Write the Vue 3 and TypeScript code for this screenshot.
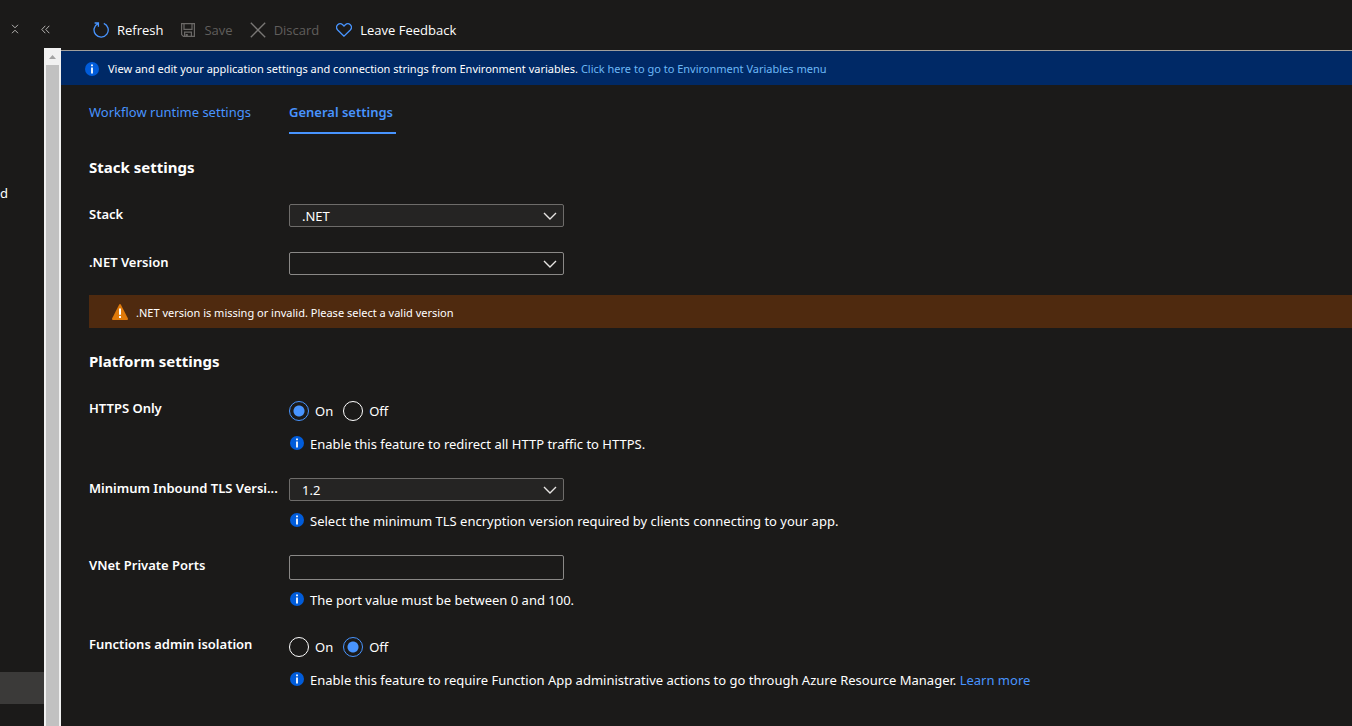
<script setup lang="ts">
import { ref } from 'vue'

const stack = ref('.NET')
const netVersion = ref('')
const tlsVersion = ref('1.2')
const privatePorts = ref('')
const httpsOnly = ref('On')
const adminIsolation = ref('Off')
const choices = ['On', 'Off']
</script>

<template>
  <div class="shell">
    <aside class="side">
      <div class="side-head">
        <button class="icon-btn" type="button" aria-label="Collapse all">
          <svg width="8" height="10" viewBox="0 0 8 10" fill="none" stroke="#b5b3b1"><path d="M1 .8 4 3.8 7 .8M1 9.2 4 6.2 7 9.2" /></svg>
        </button>
        <button class="icon-btn" type="button" aria-label="Hide menu">
          <svg width="9" height="9" viewBox="0 0 9 9" fill="none" stroke="#b5b3b1"><path d="M4.3 .8.8 4.5l3.5 3.7M8.3.8 4.8 4.5l3.5 3.7" /></svg>
        </button>
      </div>
      <div class="side-body">
        <nav class="menu">
          <a href="#" class="menu-item">d</a>
          <div class="menu-current"></div>
        </nav>
        <div class="scroll">
          <svg class="scroll-up" width="7" height="4" viewBox="0 0 7 4"><path d="M0 4 3.5 0 7 4z" fill="#a3a3a3" /></svg>
          <div class="thumb"></div>
        </div>
      </div>
    </aside>

    <main class="main">
      <div class="toolbar">
        <button class="cmd" type="button">
          <svg width="16" height="16" viewBox="0 0 16 16" fill="none" stroke="#4894fe" stroke-width="1.3"><path d="M10.8 1.4A7.1 7.1 0 1 1 5 1.6M1.6 1h3.8v3.8" /></svg>
          Refresh
        </button>
        <button class="cmd" type="button" disabled>
          <svg width="16" height="16" viewBox="0 0 16 16" fill="none" stroke="#6a6866" stroke-width="1.2"><path d="M1.6 1.6h12.8v12.8H3.4L1.6 12.6zM4 1.8v5.6h8V1.8M4.6 14.2v-4h6.8v4" /><path d="M5.6 12h2.200v2.400H5.600z" fill="#6a6866" stroke="none" /></svg>
          Save
        </button>
        <button class="cmd" type="button" disabled>
          <svg width="16" height="16" viewBox="0 0 16 16" fill="none" stroke="#797775" stroke-width="1.3"><path d="M.8.8l14.4 14.4M15.2.8.8 15.2" /></svg>
          Discard
        </button>
        <button class="cmd" type="button">
          <svg width="16" height="16" viewBox="0 0 16 16" fill="none" stroke="#4894fe" stroke-width="1.3"><path d="M8 14.2 1.7 8C.3 6.5.3 4.2 1.7 2.8s3.6-1.3 5 0L8 4.1l1.3-1.3c1.4-1.3 3.6-1.4 5 0s1.4 3.7 0 5.2z" /></svg>
          Leave Feedback
        </button>
      </div>

      <div class="banner">
        <svg class="info" width="14" height="14" viewBox="0 0 14 14"><circle cx="7" cy="7" r="7" fill="#015cda" /><path d="M6.1 2.5h1.8v1.7H6.1zM6.1 5.5h1.8v6H6.1z" fill="#fff" /></svg>
        <span>View and edit your application settings and connection strings from Environment variables. <a href="#">Click here to go to Environment Variables menu</a></span>
      </div>

      <div class="tabs" role="tablist">
        <button class="tab" type="button" role="tab" aria-selected="false">Workflow runtime settings</button>
        <button class="tab active" type="button" role="tab" aria-selected="true">General settings</button>
      </div>

      <form class="content">
        <h2>Stack settings</h2>
        <div class="row">
          <label class="label" for="stack">Stack</label>
          <div class="select-box filled">
            <select id="stack" v-model="stack"><option>.NET</option></select>
            <svg class="chevron" width="14" height="8" viewBox="0 0 14 8" fill="none" stroke="#e6e4e2" stroke-width="1.4"><path d="M1 1l6 6 6-6" /></svg>
          </div>
        </div>
        <div class="row">
          <label class="label" for="version">.NET Version</label>
          <div class="select-box">
            <select id="version" v-model="netVersion"><option value=""></option></select>
            <svg class="chevron" width="14" height="8" viewBox="0 0 14 8" fill="none" stroke="#e6e4e2" stroke-width="1.4"><path d="M1 1l6 6 6-6" /></svg>
          </div>
        </div>

        <div class="warning" role="alert">
          <svg width="16" height="16" viewBox="0 0 16 16"><path d="M7.2.6Q8-.5 8.8.6l7 13.6q.6 1.5-.8 1.8H1Q-.4 15.7.2 14.2z" fill="#e07a0a" /><path d="M7 4.5h2v6.3H7zM7 12h2v2H7z" fill="#fff" /></svg>
          <span>.NET version is missing or invalid. Please select a valid version</span>
        </div>

        <h2>Platform settings</h2>
        <div class="row">
          <span id="https-label" class="label">HTTPS Only</span>
          <div>
            <div class="radios" role="radiogroup" aria-labelledby="https-label">
              <label v-for="c in choices" :key="c"><input v-model="httpsOnly" type="radio" name="https" :value="c" />{{ c }}</label>
            </div>
            <p class="help">
              <svg class="info" width="14" height="14" viewBox="0 0 14 14"><circle cx="7" cy="7" r="7" fill="#015cda" /><path d="M6.1 2.5h1.8v1.7H6.1zM6.1 5.5h1.8v6H6.1z" fill="#fff" /></svg>
              <span>Enable this feature to redirect all HTTP traffic to HTTPS.</span>
            </p>
          </div>
        </div>
        <div class="row">
          <label class="label" for="tls">Minimum Inbound TLS Versi...</label>
          <div>
            <div class="select-box filled">
              <select id="tls" v-model="tlsVersion"><option>1.2</option></select>
              <svg class="chevron" width="14" height="8" viewBox="0 0 14 8" fill="none" stroke="#e6e4e2" stroke-width="1.4"><path d="M1 1l6 6 6-6" /></svg>
            </div>
            <p class="help">
              <svg class="info" width="14" height="14" viewBox="0 0 14 14"><circle cx="7" cy="7" r="7" fill="#015cda" /><path d="M6.1 2.5h1.8v1.7H6.1zM6.1 5.5h1.8v6H6.1z" fill="#fff" /></svg>
              <span>Select the minimum TLS encryption version required by clients connecting to your app.</span>
            </p>
          </div>
        </div>
        <div class="row">
          <label class="label" for="ports">VNet Private Ports</label>
          <div>
            <input id="ports" v-model="privatePorts" class="text" type="text" />
            <p class="help">
              <svg class="info" width="14" height="14" viewBox="0 0 14 14"><circle cx="7" cy="7" r="7" fill="#015cda" /><path d="M6.1 2.5h1.8v1.7H6.1zM6.1 5.5h1.8v6H6.1z" fill="#fff" /></svg>
              <span>The port value must be between 0 and 100.</span>
            </p>
          </div>
        </div>
        <div class="row">
          <span id="iso-label" class="label">Functions admin isolation</span>
          <div>
            <div class="radios" role="radiogroup" aria-labelledby="iso-label">
              <label v-for="c in choices" :key="c"><input v-model="adminIsolation" type="radio" name="isolation" :value="c" />{{ c }}</label>
            </div>
            <p class="help">
              <svg class="info" width="14" height="14" viewBox="0 0 14 14"><circle cx="7" cy="7" r="7" fill="#015cda" /><path d="M6.1 2.5h1.8v1.7H6.1zM6.1 5.5h1.8v6H6.1z" fill="#fff" /></svg>
              <span>Enable this feature to require Function App administrative actions to go through Azure Resource Manager. <a href="#">Learn more</a></span>
            </p>
          </div>
        </div>
      </form>
    </main>
  </div>
</template>

<style>
body {
  margin: 0;
  background: #1b1a19;
}
</style>

<style scoped>
.shell {
  display: flex;
  min-height: 100vh;
  color: #fff;
  font: 13px/20px "Segoe UI", "Noto Sans", "Open Sans", sans-serif;
}
.shell *, .shell {
  box-sizing: border-box;
}
svg {
  flex: none;
  display: block;
}
button, input, select {
  font: inherit;
  color: inherit;
}
button {
  border: 0;
  padding: 0;
  background: none;
}
a {
  color: #4894fe;
  text-decoration: none;
}
.side {
  flex: none;
  width: 61px;
  display: flex;
  flex-direction: column;
}
.side-head {
  height: 48px;
  padding: 10px 11px 0;
  display: flex;
  align-items: center;
  justify-content: space-between;
}
.side-body {
  flex: 1;
  display: flex;
}
.menu {
  flex: 1;
  display: flex;
  flex-direction: column;
  justify-content: space-between;
  padding: 135px 0 22px;
}
.menu-item {
  color: #fff;
}
.menu-current {
  height: 32px;
  background: #3b3a39;
}
.scroll {
  width: 17px;
  display: flex;
  flex-direction: column;
  align-items: center;
  background: #f1f1f1;
}
.scroll-up {
  margin: 7px 0 6px;
}
.thumb {
  flex: 1;
  width: 13px;
  background: #c1c1c1;
}
.main {
  flex: 1;
  min-width: 0;
}
.toolbar {
  height: 51px;
  padding: 9px 0 0 32px;
  display: flex;
  align-items: center;
  gap: 17px;
  border-bottom: 1px solid #a19f9d;
  font-family: "Segoe UI", "Open Sans", sans-serif;
}
.cmd {
  display: flex;
  align-items: center;
  gap: 8px;
}
.cmd:disabled {
  color: #605e5c;
}
.banner {
  min-height: 34px;
  padding: 2px 24px 0;
  display: flex;
  align-items: center;
  gap: 9px;
  background: #002966;
  font-size: 11px;
}
.banner a {
  color: #6cb8f6;
}
.tabs {
  display: flex;
  gap: 38px;
  padding: 15px 28px 0;
}
.tab {
  height: 34px;
  padding-bottom: 8px;
  color: #4894fe;
  border-bottom: 2px solid transparent;
}
.tab.active {
  padding-right: 3px;
  font-weight: 600;
  border-bottom-color: #4894fe;
}
.content {
  padding: 21px 0 0 28px;
}
h2 {
  margin: 0 0 25px;
  font-size: 15px;
  line-height: 24px;
  font-weight: 700;
}
.row {
  display: grid;
  grid-template-columns: 192px minmax(0, 1fr);
  column-gap: 8px;
  align-items: start;
  min-height: 24px;
  margin-bottom: 24px;
}
.label {
  font-weight: 600;
  white-space: nowrap;
}
.select-box {
  display: grid;
  width: 275px;
  height: 23px;
  align-items: center;
  border: 1px solid #8a8886;
  border-radius: 2px;
}
.select-box.filled {
  background: #252423;
  border-color: #6e6c6a;
}
select {
  grid-area: 1 / 1;
  appearance: none;
  width: 100%;
  height: 21px;
  padding: 0 32px 0 12px;
  border: 0;
  background: transparent;
}
.chevron {
  grid-area: 1 / 1;
  justify-self: end;
  margin-right: 6px;
  pointer-events: none;
}
.text {
  display: block;
  width: 275px;
  height: 25px;
  padding: 0 8px;
  border: 1px solid #8a8886;
  border-radius: 2px;
  background: transparent;
}
.warning {
  min-height: 33px;
  margin: -5px 0 21px;
  padding: 0 23px;
  display: flex;
  align-items: center;
  gap: 8px;
  background: #4f2a0f;
  font-size: 11px;
}
.warning span {
  padding-top: 2px;
}
.radios {
  height: 26px;
  display: flex;
  align-items: center;
  gap: 10px;
}
.radios label {
  display: flex;
  align-items: center;
  gap: 6px;
}
.radios input {
  appearance: none;
  width: 20px;
  height: 20px;
  margin: 0;
  border: 1px solid #fff;
  border-radius: 50%;
}
.radios input:checked {
  border-color: #4894fe;
  background: radial-gradient(circle, #4894fe 5px, transparent 6px);
}
.help {
  margin: 10px 0 0;
  padding-left: 1px;
  display: flex;
  align-items: center;
  gap: 6px;
}
.help .info {
  margin-bottom: 2px;
}
</style>
